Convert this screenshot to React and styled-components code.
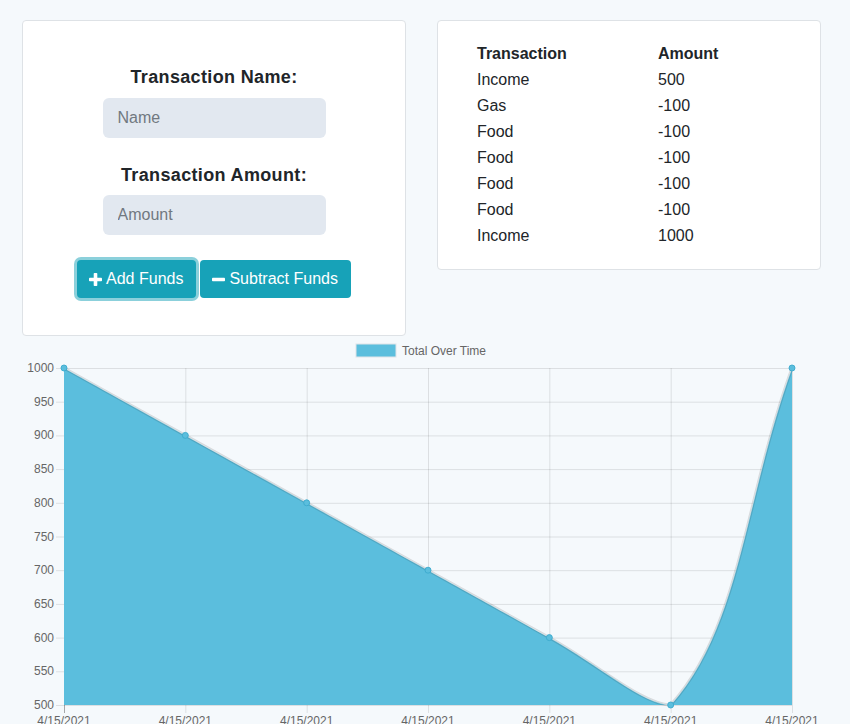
import React from 'react'
import styled, { createGlobalStyle } from 'styled-components';

const GlobalStyle = createGlobalStyle`
  body {
    margin: 0;
    background: #f5f9fc;
    font-family: 'Liberation Sans', Arial, sans-serif;
    color: #212529;
  }
`;

const Page = styled.div`
  width: 850px;
  height: 724px;
  overflow: hidden;
`;

const TopRow = styled.div`
  display: flex;
  align-items: flex-start;
  gap: 31px;
  padding: 20px 0 0 22px;
`;

const Card = styled.div`
  box-sizing: border-box;
  width: 384px;
  height: ${props => props.h}px;
  background: #fff;
  border: 1px solid #dee2e6;
  border-radius: 4px;
`;

const FormCard = styled(Card)`
  display: flex;
  flex-direction: column;
  align-items: center;
  padding-top: 45px;
`;

const Label = styled.label`
  font-size: 18px;
  font-weight: bold;
  line-height: 22px;
  letter-spacing: 0.35px;
  color: #212529;
  margin-top: ${props => props.mt || 0}px;
`;

const Input = styled.input`
  box-sizing: border-box;
  width: 223px;
  height: 40px;
  margin-top: ${props => props.mt || 0}px;
  padding: 0 15px;
  border: none;
  border-radius: 6px;
  background: #e2e8f0;
  font-family: 'Liberation Sans', Arial, sans-serif;
  font-size: 16px;
  outline: none;

  &::placeholder {
    color: #717880;
  }
`;

const Buttons = styled.div`
  display: flex;
  gap: 4px;
  margin-top: 25px;
`;

const Button = styled.button`
  box-sizing: border-box;
  display: flex;
  align-items: center;
  gap: 4px;
  height: 38px;
  padding: 0 13px 0 12px;
  border: none;
  border-radius: 4px;
  background: #17a2b8;
  color: #fff;
  font-family: 'Liberation Sans', Arial, sans-serif;
  font-size: 16px;
  box-shadow: ${props => props.focused ? '0 0 0 3px rgba(23, 162, 184, 0.5)' : 'none'};
`;

const TableCard = styled(Card)`
  padding: 20px 39px 19px;
`;

const Table = styled.div`
  display: grid;
  grid-template-columns: 181px auto;
  font-size: 16px;
  line-height: 26px;
`;

const Cell = styled.div`
  font-weight: ${props => props.head ? 'bold' : 'normal'};
  color: #212529;
`;

const ChartWrap = styled.div`
  svg {
    display: block;
    font-family: 'Liberation Sans', Arial, sans-serif;
  }
`;

const PlusIcon = ({ minus }) => (
  <svg width="13" height="13" viewBox="0 0 13 13">
    <rect x="0" y="4.7" width="13" height="3.6" rx="0.8" fill="#fff" />
    {!minus && <rect x="4.7" y="0" width="3.6" height="13" rx="0.8" fill="#fff" />}
  </svg>
);

const rows = [
  ['Income', 500],
  ['Gas', -100],
  ['Food', -100],
  ['Food', -100],
  ['Food', -100],
  ['Food', -100],
  ['Income', 1000],
];

const totals = [1000, 900, 800, 700, 600, 500, 1000];

// plot box in page coordinates
const left = 64, right = 792, top = 368, bottom = 705;
const xAt = i => left + i * (right - left) / (totals.length - 1);
const yAt = v => top + (1000 - v) / 500 * (bottom - top);

// chart.js style spline, tension 0.4
const buildPath = () => {
  const pts = totals.map((v, i) => ({ x: xAt(i), y: yAt(v) }));
  const cps = pts.map((cur, i) => {
    const prev = pts[i - 1] || cur;
    const next = pts[i + 1] || cur;
    const d01 = Math.hypot(cur.x - prev.x, cur.y - prev.y);
    const d12 = Math.hypot(next.x - cur.x, next.y - cur.y);
    let s01 = d01 / (d01 + d12);
    let s12 = d12 / (d01 + d12);
    if (isNaN(s01)) s01 = 0;
    if (isNaN(s12)) s12 = 0;
    const fa = 0.4 * s01, fb = 0.4 * s12;
    const clamp = (p) => ({
      x: Math.min(Math.max(p.x, left), right),
      y: Math.min(Math.max(p.y, top), bottom),
    });
    return {
      prev: clamp({ x: cur.x - fa * (next.x - prev.x), y: cur.y - fa * (next.y - prev.y) }),
      next: clamp({ x: cur.x + fb * (next.x - prev.x), y: cur.y + fb * (next.y - prev.y) }),
    };
  });
  let d = `M ${pts[0].x} ${pts[0].y}`;
  for (let i = 1; i < pts.length; i++) {
    const a = cps[i - 1].next, b = cps[i].prev;
    d += ` C ${a.x} ${a.y} ${b.x} ${b.y} ${pts[i].x} ${pts[i].y}`;
  }
  return { d, pts };
};

function Chart() {
  const { d, pts } = buildPath();
  const yTicks = [1000, 950, 900, 850, 800, 750, 700, 650, 600, 550, 500];
  return (
    <svg width="850" height="388" viewBox="0 336 850 388">
      <rect x="356" y="344" width="40" height="13" fill="#5bbedd" stroke="#e0e4e8" strokeWidth="1" />
      <text x="402" y="355" fontSize="12" fill="#666">Total Over Time</text>

      {yTicks.map(v => (
        <g key={v}>
          <line x1="56" x2={right} y1={yAt(v) + 0.5} y2={yAt(v) + 0.5} stroke="rgba(0,0,0,0.1)" />
          <text x="54" y={yAt(v) + 4} fontSize="12" fill="#666" textAnchor="end">{v}</text>
        </g>
      ))}
      {totals.map((v, i) => (
        <g key={i}>
          <line x1={xAt(i) + 0.5} x2={xAt(i) + 0.5} y1={top} y2={bottom + 8} stroke="rgba(0,0,0,0.1)" />
          <text x={xAt(i)} y="725" fontSize="12" fill="#666" textAnchor="middle">4/15/2021</text>
        </g>
      ))}
      <line x1={left + 0.5} x2={left + 0.5} y1={top} y2={bottom + 8} stroke="rgba(0,0,0,0.25)" />

      <path d={`${d} L ${right} ${bottom} L ${left} ${bottom} Z`} fill="#5bbedd" />
      <path d={d} fill="none" stroke="rgba(0,0,0,0.12)" strokeWidth="3" />
      <path d={d} fill="none" stroke="rgba(255,255,255,0.35)" strokeWidth="1" />
      {pts.map((p, i) => (
        <circle key={i} cx={p.x} cy={p.y} r="3" fill="#5bbedd" stroke="rgba(60,170,205,0.9)" strokeWidth="1" />
      ))}
    </svg>
  );
}

export default function App() {
  return (
    <Page>
      <GlobalStyle />
      <TopRow>
        <FormCard h={316}>
          <Label>Transaction Name:</Label>
          <Input mt={10} placeholder="Name" />
          <Label mt={26}>Transaction Amount:</Label>
          <Input mt={9} placeholder="Amount" />
          <Buttons>
            <Button focused><PlusIcon />Add Funds</Button>
            <Button><PlusIcon minus />Subtract Funds</Button>
          </Buttons>
        </FormCard>
        <TableCard h={250}>
          <Table>
            <Cell head>Transaction</Cell>
            <Cell head>Amount</Cell>
            {rows.map(([name, amount], i) => (
              <React.Fragment key={i}>
                <Cell>{name}</Cell>
                <Cell>{amount}</Cell>
              </React.Fragment>
            ))}
          </Table>
        </TableCard>
      </TopRow>
      <ChartWrap>
        <Chart />
      </ChartWrap>
    </Page>
  );
}
